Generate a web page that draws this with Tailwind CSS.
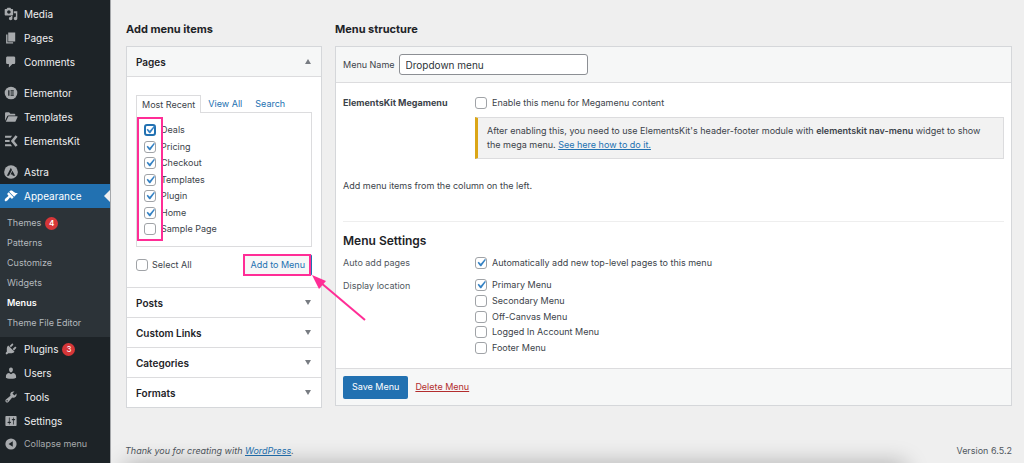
<!DOCTYPE html>
<html lang="en">
<head>
<meta charset="utf-8">
<meta name="viewport" content="width=device-width, initial-scale=1">
<title>Menus</title>
<script src="https://cdn.jsdelivr.net/npm/@tailwindcss/browser@4"></script>
</head>
<body class="relative flex min-h-screen bg-[#efefef] font-['Inter','Liberation_Sans',sans-serif] text-[9px] leading-[14px] text-[#3c434a]">
<svg class="hidden">
  <symbol id="tick" viewBox="0 0 20 20"><path fill="#3582c4" d="M14.83 4.89l1.34.94-5.81 8.38H9.02L5.78 9.67l1.34-1.25 2.57 2.4z"/></symbol>
</svg>

<nav class="w-[111px] shrink-0 border-r border-[#a5a7aa] bg-[#1d2327] pt-[2px] text-[10px] text-[#f0f0f1]">
  <a href="#" class="flex h-6 items-center gap-[6px] pl-1"><svg class="size-[14px] fill-[#a7aaad]" viewBox="0 0 20 20"><path d="M13 11V4c0-.55-.45-1-1-1h-1.67L9 1H5L3.67 3H2c-.55 0-1 .45-1 1v7c0 .55.45 1 1 1h10c.55 0 1-.45 1-1zM7 4.5c1.38 0 2.5 1.12 2.5 2.5S8.38 9.5 7 9.5 4.5 8.38 4.5 7 5.62 4.5 7 4.5zM14 6h5v10.5c0 1.38-1.12 2.5-2.5 2.5S14 17.88 14 16.5s1.12-2.5 2.5-2.5c.17 0 .34.02.5.05V9h-3V6zm-4 8.05V13h2v3.5c0 1.38-1.12 2.5-2.5 2.5S7 17.88 7 16.5 8.12 14 9.5 14c.17 0 .34.02.5.05z"/></svg>Media</a>
  <a href="#" class="flex h-6 items-center gap-[6px] pl-1"><svg class="size-[14px] fill-[#a7aaad]" viewBox="0 0 20 20"><path d="M6 15V2h10v13H6zm-1 1h8v2H3V5h2v11z"/></svg>Pages</a>
  <a href="#" class="flex h-6 items-center gap-[6px] pl-1"><svg class="size-[14px] fill-[#a7aaad]" viewBox="0 0 20 20"><path d="M5 2h9c1.1 0 2 .9 2 2v7c0 1.1-.9 2-2 2h-2l-5 5v-5H5c-1.1 0-2-.9-2-2V4c0-1.1.9-2 2-2z"/></svg>Comments</a>
  <a href="#" class="mt-[7px] flex h-6 items-center gap-[6px] pl-1"><svg class="size-[14px]" viewBox="0 0 20 20"><circle cx="10" cy="10" r="9" fill="#a7aaad"/><path fill="#1d2327" d="M6 6h1.800v8H6zM9.400 6h4.600v1.700H9.400zM9.400 9.150h4.600v1.700H9.400zM9.400 12.300h4.600V14H9.400z"/></svg>Elementor</a>
  <a href="#" class="flex h-6 items-center gap-[6px] pl-1"><svg class="size-[14px] fill-[#a7aaad]" viewBox="0 0 20 20"><path d="M1.500 15.500V4.500c0-.8.500-1.300 1.300-1.300h4.400l2 2h5.600c.8 0 1.300.5 1.300 1.300v1.300H6.200c-.7 0-1.200.3-1.500.9zM2.600 16.800L6 9.700c.2-.4.500-.6 1-.6h11.700c.6 0 .9.500.7 1l-2.800 5.900c-.2.500-.6.800-1.200.8z"/></svg>Templates</a>
  <a href="#" class="flex h-6 items-center gap-[6px] pl-1"><svg class="size-[14px]" viewBox="0 0 20 20"><path fill="#a7aaad" d="M1.500 2.500h10l-2 2.700h-8zM1.500 8.700h6.500v2.700H1.500zM1.500 14.800h8l2 2.700h-10z"/><path fill="none" stroke="#a7aaad" stroke-width="3.800" d="M18 2.800L12.200 10 18 17.200"/></svg>ElementsKit</a>
  <a href="#" class="mt-[7px] flex h-6 items-center gap-[6px] pl-1"><svg class="size-[14px]" viewBox="0 0 20 20"><circle cx="10" cy="10" r="9.800" fill="#a7aaad"/><path fill="#1d2327" d="M9.800 3.800l1.600 3.300-4.300 8.400H4zM12 8.200l3.900 7.300h-3.200l-.9-2H9.400z"/></svg>Astra</a>
  <a href="#" class="relative flex h-6 items-center gap-[6px] bg-[#2271b1] pl-1 text-white"><svg class="size-[14px] fill-white" viewBox="0 0 20 20"><path d="M14.480 11.060L7.410 3.990l1.500-1.500c.5-.56 2.300-.47 3.510.32 1.210.8 1.430 1.280 2.910 2.100 1.180.64 2.450 1.260 4.450.85zm-.71.71L6.700 4.700 4.930 6.470c-.39.39-.39 1.020 0 1.410l1.060 1.060c.39.39.39 1.030 0 1.420-.6.6-1.430 1.110-2.210 1.690-.35.26-.7.53-1.010.84C1.430 14.230.4 16.080 1.400 17.070c.99 1 2.840-.03 4.180-1.360.31-.31.58-.66.85-1.020.57-.78 1.080-1.610 1.690-2.210.39-.39 1.020-.39 1.410 0l1.060 1.060c.39.39 1.020.39 1.410 0z"/></svg>Appearance<svg class="absolute top-[6px] right-0 h-3 w-[6px] fill-[#efefef]" viewBox="0 0 6 12"><path d="M6 0v12L0 6z"/></svg></a>
  <div class="flex flex-col bg-[#2c3338] pt-[5px] pb-1 text-[9px] text-[#b4b9be]">
    <a href="#" class="flex h-5 items-center gap-1 pl-[7px]">Themes <span class="flex size-[13px] items-center justify-center rounded-full bg-[#d63638] text-[8px] font-semibold text-white">4</span></a>
    <a href="#" class="flex h-5 items-center pl-[7px]">Patterns</a>
    <a href="#" class="flex h-5 items-center pl-[7px]">Customize</a>
    <a href="#" class="flex h-5 items-center pl-[7px]">Widgets</a>
    <a href="#" class="flex h-5 items-center pl-[7px] font-semibold text-white">Menus</a>
    <a href="#" class="flex h-5 items-center pl-[7px]">Theme File Editor</a>
  </div>
  <a href="#" class="flex h-6 items-center gap-[6px] pl-1"><svg class="size-[14px] fill-[#a7aaad]" viewBox="0 0 20 20"><path d="M13.110 4.360L9.870 7.600 8 5.730l3.240-3.240c.35-.34 1.050-.2 1.560.32.52.51.66 1.210.31 1.550zm-8 1.770l.91-1.120 9.010 9.010-1.190.84c-.71.71-2.630 1.160-3.820 1.160H6.140L4.900 17.260c-.59.59-1.540.59-2.120 0-.59-.58-.59-1.530 0-2.120l1.240-1.240v-3.880c0-1.130.4-3.190 1.090-3.890zm7.260 3.970l3.240-3.240c.34-.35 1.040-.21 1.550.31.52.51.66 1.210.31 1.550l-3.240 3.250z"/></svg><span class="flex items-center gap-1">Plugins <span class="flex size-[13px] items-center justify-center rounded-full bg-[#d63638] text-[8px] text-white">3</span></span></a>
  <a href="#" class="flex h-6 items-center gap-[6px] pl-1"><svg class="size-[14px] fill-[#a7aaad]" viewBox="0 0 20 20"><path d="M10 9.250c-2.270 0-2.730-3.440-2.730-3.440C7 4.020 7.820 2 9.970 2c2.160 0 2.980 2.020 2.710 3.810 0 0-.41 3.440-2.680 3.440zm0 2.570L12.720 10c2.390 0 4.520 2.330 4.520 4.530v2.490s-3.650 1.130-7.240 1.130c-3.650 0-7.240-1.130-7.240-1.130v-2.490c0-2.250 1.940-4.480 4.470-4.480z"/></svg>Users</a>
  <a href="#" class="flex h-6 items-center gap-[6px] pl-1"><svg class="size-[14px] fill-[#a7aaad]" viewBox="0 0 20 20"><path d="M16.680 9.770c-1.340 1.340-3.300 1.670-4.950.99l-5.410 6.520c-.99.99-2.590.99-3.580 0s-.99-2.590 0-3.570l6.520-5.420c-.68-1.650-.35-3.610.99-4.950 1.280-1.280 3.120-1.620 4.720-1.060l-2.890 2.890 2.820 2.820 2.860-2.870c.53 1.580.18 3.390-1.080 4.650zM3.810 16.210c.4.39 1.040.39 1.430 0 .4-.4.4-1.040 0-1.430-.39-.4-1.030-.4-1.430 0-.39.39-.39 1.030 0 1.430z"/></svg>Tools</a>
  <a href="#" class="flex h-6 items-center gap-[6px] pl-1"><svg class="size-[14px] fill-[#a7aaad]" viewBox="0 0 20 20"><path d="M18 16V4c0-.55-.45-1-1-1H3c-.55 0-1 .45-1 1v12c0 .55.45 1 1 1h14c.55 0 1-.45 1-1zM8 11h1c.55 0 1 .45 1 1s-.45 1-1 1H8v1.500c0 .28-.22.5-.5.5s-.5-.22-.5-.5V13H6c-.55 0-1-.45-1-1s.45-1 1-1h1V5.500c0-.28.22-.5.5-.5s.5.22.5.5V11zm5-2h-1c-.55 0-1-.45-1-1s.45-1 1-1h1V5.500c0-.28.22-.5.5-.5s.5.22.5.5V7h1c.55 0 1 .45 1 1s-.45 1-1 1h-1v5.500c0 .28-.22.5-.5.5s-.5-.22-.5-.5V9z"/></svg>Settings</a>
  <button type="button" class="flex h-[22px] items-center gap-[6px] pl-1 text-[9px] text-[#a7aaad]"><svg class="size-[14px]" viewBox="0 0 20 20"><circle cx="10" cy="10" r="8" fill="#a7aaad"/><path fill="#1d2327" d="M12.500 6v8L6.500 10z"/></svg>Collapse menu</button>
</nav>

<div class="relative flex min-w-0 flex-1 flex-col overflow-hidden pt-[21px] pr-3 pl-[15px]">
  <div class="pointer-events-none absolute top-full right-[118px] left-[14px] h-5 shadow-[0_0_22px_rgba(0,0,0,0.28)]"></div>
  <div class="flex items-start gap-[13px]">
    <section class="w-[196px] shrink-0">
      <h2 class="mb-[9px] text-[11px] leading-4 font-bold text-[#1d2327]">Add menu items</h2>
      <div class="border border-[#d5d7da] bg-white">
        <h3><button type="button" class="flex h-[30px] w-full items-center justify-between border-b border-[#dcdcde] bg-[#f6f7f7] pr-[10px] pl-[9px] text-[10px] font-semibold text-[#1d2327]">Pages<svg class="h-[5px] w-[6px] fill-[#787c82]" viewBox="0 0 6 5"><path d="M3 0l3 5H0z"/></svg></button></h3>
        <div class="px-[9px] pt-[18px] pb-[11px]">
          <div class="flex">
            <a href="#" class="relative z-10 -mb-px flex h-[18px] items-center border border-b-0 border-[#dcdcde] bg-white px-[5px]">Most Recent</a>
            <a href="#" class="flex items-center px-[7px] text-[#2271b1]">View All</a>
            <a href="#" class="flex items-center px-[6px] text-[#2271b1]">Search</a>
          </div>
          <div class="relative flex h-[135px] flex-col justify-between border border-[#dcdcde] py-[11px] pl-[7px]">
            <label class="flex items-center gap-[5px] leading-3"><span class="relative size-3"><input type="checkbox" checked class="block size-3 appearance-none rounded-[3px] border-2 border-[#2271b1] bg-white"><svg class="pointer-events-none absolute -inset-[2px] size-4"><use href="#tick"/></svg></span>Deals</label>
            <label class="flex items-center gap-[5px] leading-3"><span class="relative size-3"><input type="checkbox" checked class="block size-3 appearance-none rounded-[3px] border border-[#a0a3a7] bg-white"><svg class="pointer-events-none absolute -inset-[2px] size-4"><use href="#tick"/></svg></span>Pricing</label>
            <label class="flex items-center gap-[5px] leading-3"><span class="relative size-3"><input type="checkbox" checked class="block size-3 appearance-none rounded-[3px] border border-[#a0a3a7] bg-white"><svg class="pointer-events-none absolute -inset-[2px] size-4"><use href="#tick"/></svg></span>Checkout</label>
            <label class="flex items-center gap-[5px] leading-3"><span class="relative size-3"><input type="checkbox" checked class="block size-3 appearance-none rounded-[3px] border border-[#a0a3a7] bg-white"><svg class="pointer-events-none absolute -inset-[2px] size-4"><use href="#tick"/></svg></span>Templates</label>
            <label class="flex items-center gap-[5px] leading-3"><span class="relative size-3"><input type="checkbox" checked class="block size-3 appearance-none rounded-[3px] border border-[#a0a3a7] bg-white"><svg class="pointer-events-none absolute -inset-[2px] size-4"><use href="#tick"/></svg></span>Plugin</label>
            <label class="flex items-center gap-[5px] leading-3"><span class="relative size-3"><input type="checkbox" checked class="block size-3 appearance-none rounded-[3px] border border-[#a0a3a7] bg-white"><svg class="pointer-events-none absolute -inset-[2px] size-4"><use href="#tick"/></svg></span>Home</label>
            <label class="flex items-center gap-[5px] leading-3"><input type="checkbox" class="block size-3 appearance-none rounded-[3px] border border-[#a0a3a7] bg-white">Sample Page</label>
            <div class="pointer-events-none absolute top-[4px] left-0 h-[124px] w-[26px] border-2 border-[#ff2d96]"></div>
          </div>
          <div class="mt-[7px] flex items-center justify-between">
            <label class="flex items-center gap-1"><input type="checkbox" class="block size-3 appearance-none rounded-[3px] border border-[#a0a3a7] bg-white">Select All</label>
            <div class="relative">
              <button type="button" class="flex h-[22px] items-center rounded-[2px] border border-[#2271b1] bg-[#f6f7f7] px-[6px] text-[#2271b1]">Add to Menu</button>
              <div class="pointer-events-none absolute inset-y-0 right-px left-0 border-2 border-[#ff2d96]"></div>
              <svg class="pointer-events-none absolute top-[21px] left-full z-20 h-[48px] w-[56px]" viewBox="0 0 56 48"><path stroke="#ff2d96" stroke-width="2" d="M8 7l45 38"/><path fill="#ff2d96" d="M0 0l14 6-7 8z"/></svg>
            </div>
          </div>
        </div>
        <h3><button type="button" class="flex h-[30px] w-full items-center justify-between border-t border-[#dcdcde] pr-[10px] pl-[9px] text-[10px] font-semibold text-[#1d2327]">Posts<svg class="h-[5px] w-[6px] fill-[#787c82]" viewBox="0 0 6 5"><path d="M0 0h6L3 5z"/></svg></button></h3>
        <h3><button type="button" class="flex h-[30px] w-full items-center justify-between border-t border-[#dcdcde] pr-[10px] pl-[9px] text-[10px] font-semibold text-[#1d2327]">Custom Links<svg class="h-[5px] w-[6px] fill-[#787c82]" viewBox="0 0 6 5"><path d="M0 0h6L3 5z"/></svg></button></h3>
        <h3><button type="button" class="flex h-[30px] w-full items-center justify-between border-t border-[#dcdcde] pr-[10px] pl-[9px] text-[10px] font-semibold text-[#1d2327]">Categories<svg class="h-[5px] w-[6px] fill-[#787c82]" viewBox="0 0 6 5"><path d="M0 0h6L3 5z"/></svg></button></h3>
        <h3><button type="button" class="flex h-[30px] w-full items-center justify-between border-t border-[#dcdcde] pr-[10px] pl-[9px] text-[10px] font-semibold text-[#1d2327]">Formats<svg class="h-[5px] w-[6px] fill-[#787c82]" viewBox="0 0 6 5"><path d="M0 0h6L3 5z"/></svg></button></h3>
      </div>
    </section>

    <section class="min-w-0 flex-1">
      <h2 class="mb-[9px] text-[11px] leading-4 font-bold text-[#1d2327]">Menu structure</h2>
      <form class="border border-[#d5d7da] bg-white">
        <div class="flex h-9 items-center gap-1 border-b border-[#dcdcde] bg-[#f6f7f7] px-[7px]">
          <label for="menu-name">Menu Name</label>
          <input id="menu-name" type="text" value="Dropdown menu" class="h-[21px] w-[189px] rounded-[3px] border border-[#8c8f94] bg-white px-[6px] text-[10px] text-[#2c3338]">
        </div>
        <div class="px-[7px] pt-[13px] pb-[14px]">
          <div class="flex">
            <h3 class="w-[132px] shrink-0 font-bold">ElementsKit Megamenu</h3>
            <div class="flex-1">
              <label class="flex items-center gap-[5px]"><input type="checkbox" class="block size-3 appearance-none rounded-[3px] border border-[#a0a3a7] bg-white">Enable this menu for Megamenu content</label>
              <p class="mt-[7px] border border-l-[3px] border-[#dcdcde] border-l-[#dba617] bg-[#f2f2f2] py-[6px] pr-5 pl-[9px]">After enabling this, you need to use ElementsKit's header-footer module with <strong class="font-semibold">elementskit nav-menu</strong> widget to show the mega menu. <a href="#" class="text-[#2271b1] underline">See here how to do it.</a></p>
            </div>
          </div>
          <p class="mt-5">Add menu items from the column on the left.</p>
          <div class="mt-7 border-t border-[#eeeeee] pt-[11px]">
            <h3 class="text-[12px] leading-4 font-semibold text-[#1d2327]">Menu Settings</h3>
            <fieldset class="mt-[7px] flex">
              <legend class="float-left w-[132px] shrink-0 text-[#50575e]">Auto add pages</legend>
              <label class="flex items-center gap-[5px]"><span class="relative size-3"><input type="checkbox" checked class="block size-3 appearance-none rounded-[3px] border border-[#a0a3a7] bg-white"><svg class="pointer-events-none absolute -inset-[2px] size-4"><use href="#tick"/></svg></span>Automatically add new top-level pages to this menu</label>
            </fieldset>
            <fieldset class="mt-[9px] flex">
              <legend class="float-left w-[132px] shrink-0 text-[#50575e]">Display location</legend>
              <div class="flex h-[75px] flex-col justify-between">
                <label class="flex items-center gap-[5px] leading-3"><span class="relative size-3"><input type="checkbox" checked class="block size-3 appearance-none rounded-[3px] border border-[#a0a3a7] bg-white"><svg class="pointer-events-none absolute -inset-[2px] size-4"><use href="#tick"/></svg></span>Primary Menu</label>
                <label class="flex items-center gap-[5px] leading-3"><input type="checkbox" class="block size-3 appearance-none rounded-[3px] border border-[#a0a3a7] bg-white">Secondary Menu</label>
                <label class="flex items-center gap-[5px] leading-3"><input type="checkbox" class="block size-3 appearance-none rounded-[3px] border border-[#a0a3a7] bg-white">Off-Canvas Menu</label>
                <label class="flex items-center gap-[5px] leading-3"><input type="checkbox" class="block size-3 appearance-none rounded-[3px] border border-[#a0a3a7] bg-white">Logged In Account Menu</label>
                <label class="flex items-center gap-[5px] leading-3"><input type="checkbox" class="block size-3 appearance-none rounded-[3px] border border-[#a0a3a7] bg-white">Footer Menu</label>
              </div>
            </fieldset>
          </div>
        </div>
        <div class="flex h-[37px] items-center gap-[7px] border-t border-[#dcdcde] bg-[#f6f7f7] px-[7px]">
          <button type="submit" class="h-[23px] rounded-[2px] bg-[#2271b1] px-[9px] text-white">Save Menu</button>
          <a href="#" class="text-[#b32d2e] underline">Delete Menu</a>
        </div>
      </form>
    </section>
  </div>
  <footer class="mt-auto flex items-center justify-between pb-[5px] text-[#50575e]">
    <p class="-ml-px italic">Thank you for creating with <a href="#" class="text-[#2271b1] underline">WordPress</a>.</p>
    <p>Version 6.5.2</p>
  </footer>
</div>
</body>
</html>
